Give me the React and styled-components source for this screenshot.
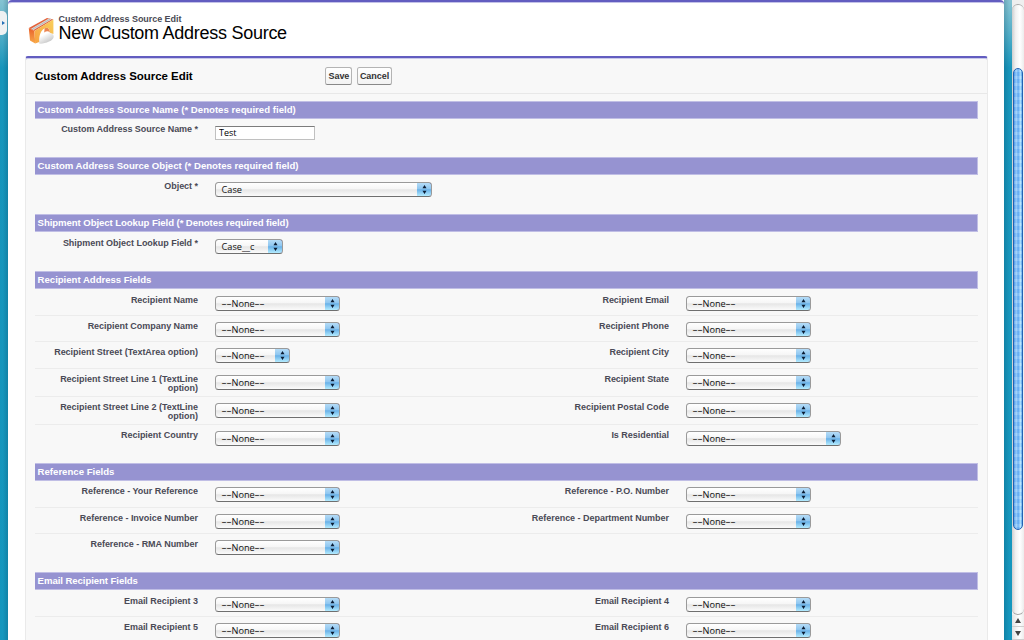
import React from "react";
import styled, { createGlobalStyle } from "styled-components";

const GlobalStyle = createGlobalStyle`
  * { box-sizing: border-box; }
  html, body { margin: 0; padding: 0; overflow: hidden; }
  body { font-family: "Liberation Sans", Arial, sans-serif; }
`;

const Screen = styled.div`
  display: flex;
  width: 1024px;
  height: 640px;
  overflow: hidden;
`;

const Gutter = styled.div`
  width: 8px;
  flex: none;
  padding-top: 11px;
  background:
    linear-gradient(to ${(p) => p.$shade}, rgba(0, 50, 75, 0) 35%, rgba(0, 50, 75, 0.2)),
    linear-gradient(#86c3d2 0, #55afc8 32px, #1795bb 68px, #1597be 100%);
`;

const SidebarTab = styled.div`
  display: flex;
  align-items: center;
  width: 7px;
  height: 24px;
  padding-left: 2px;
  border-radius: 0 5px 5px 0;
  background: #eef1f2;
  svg { display: block; }
`;

const Page = styled.main`
  flex: 1;
  min-width: 0;
  height: 640px;
  overflow: hidden;
  padding: 0 16px 0 17px;
  background: #fff;
  border-top: 2px solid #625dc0;
  border-radius: 4px 4px 0 0;
  box-shadow: inset 0 1px 0 #c3c1e8;
`;

const PageHeader = styled.header`
  display: flex;
  height: 54px;
  padding: 12px 0 0 3px;
  svg { display: block; margin-top: 3px; }
`;

const Titles = styled.div`
  padding-left: 3.5px;
`;

const Kicker = styled.div`
  font: bold 9px/10px "Liberation Sans", Arial, sans-serif;
  color: #4a4a56;
  letter-spacing: -0.05px;
  white-space: nowrap;
`;

const PageTitle = styled.h1`
  margin: -1px 0 0;
  font: normal 18px/20px "Liberation Sans", Arial, sans-serif;
  letter-spacing: -0.27px;
  color: #000;
  white-space: nowrap;
`;

const Card = styled.section`
  height: 700px;
  background: #f8f8f8;
  border: 1px solid #eaeaea;
  border-top: 2px solid #625dc0;
  border-radius: 3px 3px 0 0;
  box-shadow: inset 0 1px 0 #c9c8ea;
`;

const CardBar = styled.div`
  display: flex;
  align-items: center;
  height: 36px;
  padding: 1px 0 0 9px;
  border-bottom: 1px solid #e8e8e8;
`;

const CardTitle = styled.h2`
  width: 290.4px;
  margin: 0;
  font: bold 11.5px/14px "Liberation Sans", Arial, sans-serif;
  letter-spacing: -0.04px;
  color: #000;
  white-space: nowrap;
`;

const Button = styled.button`
  width: ${(p) => p.$w}px;
  height: 18px;
  margin-right: 4.6px;
  padding: 0;
  border: 1px solid #b4b4b4;
  border-bottom-color: #888;
  border-radius: 2.5px;
  background: linear-gradient(#fff, #f2f2f2);
  font: bold 9px/14px "Liberation Sans", Arial, sans-serif;
  letter-spacing: -0.05px;
  color: #333;
`;

const CardBody = styled.div`
  padding: 6.6px 9px 0;
`;

const Section = styled.section`
  padding-bottom: 11.8px;
`;

const SectionTitle = styled.h3`
  height: 18px;
  margin: 0 0 0.6px;
  padding-left: 2.6px;
  border: 1px solid #c0bee5;
  border-left: 0;
  background: #9693d1;
  font: bold 9.6px/15.4px "Liberation Sans", Arial, sans-serif;
  letter-spacing: ${(p) => p.$tracking || 0}px;
  color: #fff;
`;

const Row = styled.div`
  display: grid;
  grid-template-columns: 471px 1fr;
  height: ${(p) => (p.$tall ? 28 : 26.4)}px;
  border-bottom: 1px solid ${(p) => (p.$last ? "transparent" : "#ececec")};
`;

const Field = styled.div`
  display: flex;
  align-items: flex-start;
`;

const Label = styled.label`
  width: 163px;
  padding: 6px 0 0 8px;
  font: bold 9px/9.4px "Liberation Sans", Arial, sans-serif;
  letter-spacing: -0.03px;
  color: #4a4a56;
  text-align: right;
`;

const TextInput = styled.input`
  width: 100px;
  height: 14px;
  margin: 6.4px 0 0 17px;
  padding: 0 3px;
  border: 1px solid #c0c0c0;
  border-top-color: #7c7c7c;
  border-radius: 0;
  background: #fff;
  font: 500 9px/12px "Open Sans", sans-serif;
  color: #000;
`;

const Select = styled.div`
  display: flex;
  width: ${(p) => p.$w}px;
  height: 15px;
  margin: 6px 0 0 17px;
  overflow: hidden;
  border: 1px solid #9a9a9a;
  border-bottom-color: #6f6f6f;
  border-radius: 3.5px;
  background: linear-gradient(#fff 0, #f6f6f6 45%, #e6e6e6 52%, #fbfbfb 100%);
`;

const SelectValue = styled.span`
  flex: 1;
  padding-left: 5.5px;
  font: 500 9.2px/14px "Open Sans", sans-serif;
  color: #111;
  white-space: nowrap;
`;

const Dashes = styled.span`
  display: inline-block;
  width: 10px;
  font-family: "DejaVu Sans", sans-serif;
  line-height: 12px;
  letter-spacing: -0.3px;
  text-indent: -0.4px;
  transform: scaleX(1.65);
  transform-origin: left;
`;

const Stepper = styled.span`
  display: flex;
  align-items: center;
  justify-content: center;
  width: 15px;
  height: 15px;
  margin: -1px -1px 0 0;
  border: 1px solid #4a68b4;
  border-left: 0;
  border-bottom-color: #4f6a88;
  border-radius: 0 3.5px 3.5px 0;
  background: linear-gradient(#b5dcf7 0, #8ec6f0 45%, #69b1e8 52%, #b4ecff 100%);
`;

const Scrollbar = styled.aside`
  display: flex;
  flex-direction: column;
  width: 12px;
  flex: none;
  height: 640px;
  background: #efefef;
`;

const Track = styled.div`
  height: 611px;
  margin-top: 4px;
  padding: 63px 1px 0;
  border: 1px solid #aaa;
  border-width: 1px 0;
  border-radius: 6px;
  background: linear-gradient(to right, #cfcfcf, #f1f1f1 30%, #fff 65%, #ececec);
`;

const Thumb = styled.div`
  height: 462px;
  border: 1px solid #2462b4;
  border-radius: 5px;
  background:
    repeating-linear-gradient(rgba(255, 255, 255, 0.12) 0 3px, rgba(20, 100, 220, 0.06) 3px 7px),
    linear-gradient(to right, #4f9be6, #9fd2fc 28%, #62abf3 52%, #b2e4ff 82%, #5aa4e4);
`;

const ArrowBox = styled.div`
  display: flex;
  align-items: center;
  justify-content: center;
  height: ${(p) => p.$h}px;
  border-bottom: 1px solid #cfcfcf;
  background: linear-gradient(to right, #e2e2e2, #fff 60%, #ededed);
`;

function BookIcon() {
  return (
    <svg width="27" height="28" viewBox="0 0 27 28">
      <defs>
        <linearGradient id="cover" x1="0" y1="1" x2="1" y2="0">
          <stop offset="0" stopColor="#f7a040" />
          <stop offset="1" stopColor="#f9cf5c" />
        </linearGradient>
        <linearGradient id="side" x1="0" y1="0" x2="0" y2="1">
          <stop offset="0" stopColor="#e8602c" />
          <stop offset="1" stopColor="#f8a848" />
        </linearGradient>
        <linearGradient id="disc" x1="0.2" y1="0" x2="0.7" y2="1">
          <stop offset="0.4" stopColor="#fff" />
          <stop offset="1" stopColor="#c0c0c0" />
        </linearGradient>
      </defs>
      <path d="M11 26.6 C10 18 13 11 18 10.5 L23 16 C27.5 18 26 22.5 21 24.6 C17.6 26.2 14 27 11 26.6 Z" fill="url(#disc)" />
      <path d="M0.8 11 L19 1 L25.4 2.6 L6.4 14 Z" fill="#e4623a" />
      <path d="M3 11.8 L20.8 1.6 L23.6 2.4 L5.6 13 Z" fill="#dcdcdc" />
      <path d="M4.4 12.2 L22.4 2" stroke="#a3a3a3" strokeWidth="0.6" />
      <path d="M0.8 11 L6.4 14 L7.2 26.5 L2 23.6 Z" fill="url(#side)" />
      <path d="M6.4 14 L25.4 2.6 L25.4 17 L22 15.8 C21.6 11.6 19.6 9.8 16.6 11.4 C12.8 13.4 11 18 11.2 25 L7.2 26.5 Z" fill="url(#cover)" />
      <path d="M16.6 11.4 C19.4 9.9 21.4 11.6 21.9 15.4 C20.2 14 18.4 14 16.2 15.6 Z" fill="#ea8450" />
    </svg>
  );
}

function Triangle({ dir, w, h, color }) {
  const shapes = {
    up: `0,${h} ${w},${h} ${w / 2},0`,
    down: `0,0 ${w},0 ${w / 2},${h}`,
    right: `0,0 ${w},${h / 2} 0,${h}`,
  };
  return (
    <svg width={w} height={h}>
      <polygon points={shapes[dir]} fill={color} />
    </svg>
  );
}

function Picker({ value = "--None--", width = 125 }) {
  return (
    <Select $w={width}>
      <SelectValue>
        {value === "--None--" ? (
          <><Dashes>--</Dashes>None<Dashes>--</Dashes></>
        ) : value}
      </SelectValue>
      <Stepper>
        <svg width="5" height="9" viewBox="0 0 5 9">
          <path d="M2.5 0 L4.5 3.2 H0.5 Z M2.5 9 L4.5 5.8 H0.5 Z" fill="#0b1c33" />
        </svg>
      </Stepper>
    </Select>
  );
}

const sections = [
  {
    title: "Custom Address Source Name (* Denotes required field)",
    tracking: 0.02,
    rows: [[{ label: "Custom Address Source Name *", input: "Test" }]],
  },
  {
    title: "Custom Address Source Object (* Denotes required field)",
    rows: [[{ label: "Object *", value: "Case", width: 217 }]],
  },
  {
    title: "Shipment Object Lookup Field (* Denotes required field)",
    tracking: -0.08,
    rows: [[{ label: "Shipment Object Lookup Field *", value: "Case__c", width: 68 }]],
  },
  {
    title: "Recipient Address Fields",
    tracking: -0.02,
    rows: [
      [{ label: "Recipient Name" }, { label: "Recipient Email" }],
      [{ label: "Recipient Company Name" }, { label: "Recipient Phone" }],
      [{ label: "Recipient Street (TextArea option)", width: 75 }, { label: "Recipient City" }],
      [{ label: "Recipient Street Line 1 (TextLine option)", tall: true }, { label: "Recipient State" }],
      [{ label: "Recipient Street Line 2 (TextLine option)", tall: true }, { label: "Recipient Postal Code" }],
      [{ label: "Recipient Country" }, { label: "Is Residential", width: 155 }],
    ],
  },
  {
    title: "Reference Fields",
    rows: [
      [{ label: "Reference - Your Reference" }, { label: "Reference - P.O. Number" }],
      [{ label: "Reference - Invoice Number" }, { label: "Reference - Department Number" }],
      [{ label: "Reference - RMA Number" }],
    ],
  },
  {
    title: "Email Recipient Fields",
    tracking: -0.07,
    rows: [
      [{ label: "Email Recipient 3" }, { label: "Email Recipient 4" }],
      [{ label: "Email Recipient 5" }, { label: "Email Recipient 6" }],
    ],
  },
];

export default function App() {
  return (
    <>
      <GlobalStyle />
      <Screen>
        <Gutter $shade="right">
          <SidebarTab><Triangle dir="right" w={3} h={4} color="#2470b8" /></SidebarTab>
        </Gutter>
        <Page>
          <PageHeader>
            <BookIcon />
            <Titles>
              <Kicker>Custom Address Source Edit</Kicker>
              <PageTitle>New Custom Address Source</PageTitle>
            </Titles>
          </PageHeader>
          <Card>
            <CardBar>
              <CardTitle>Custom Address Source Edit</CardTitle>
              <Button $w={27}>Save</Button>
              <Button $w={35}>Cancel</Button>
            </CardBar>
            <CardBody>
              {sections.map((s) => (
                <Section key={s.title}>
                  <SectionTitle $tracking={s.tracking}>{s.title}</SectionTitle>
                  {s.rows.map((row, i) => (
                    <Row key={i} $tall={row.some((f) => f.tall)} $last={i === s.rows.length - 1}>
                      {row.map((f) => (
                        <Field key={f.label}>
                          <Label>{f.label}</Label>
                          {f.input ? (
                            <TextInput defaultValue={f.input} />
                          ) : (
                            <Picker value={f.value} width={f.width} />
                          )}
                        </Field>
                      ))}
                    </Row>
                  ))}
                </Section>
              ))}
            </CardBody>
          </Card>
        </Page>
        <Gutter $shade="left" />
        <Scrollbar>
          <Track><Thumb /></Track>
          <ArrowBox $h={12}><Triangle dir="up" w={6} h={5} color="#444" /></ArrowBox>
          <ArrowBox $h={13}><Triangle dir="down" w={6} h={5} color="#444" /></ArrowBox>
        </Scrollbar>
      </Screen>
    </>
  );
}
